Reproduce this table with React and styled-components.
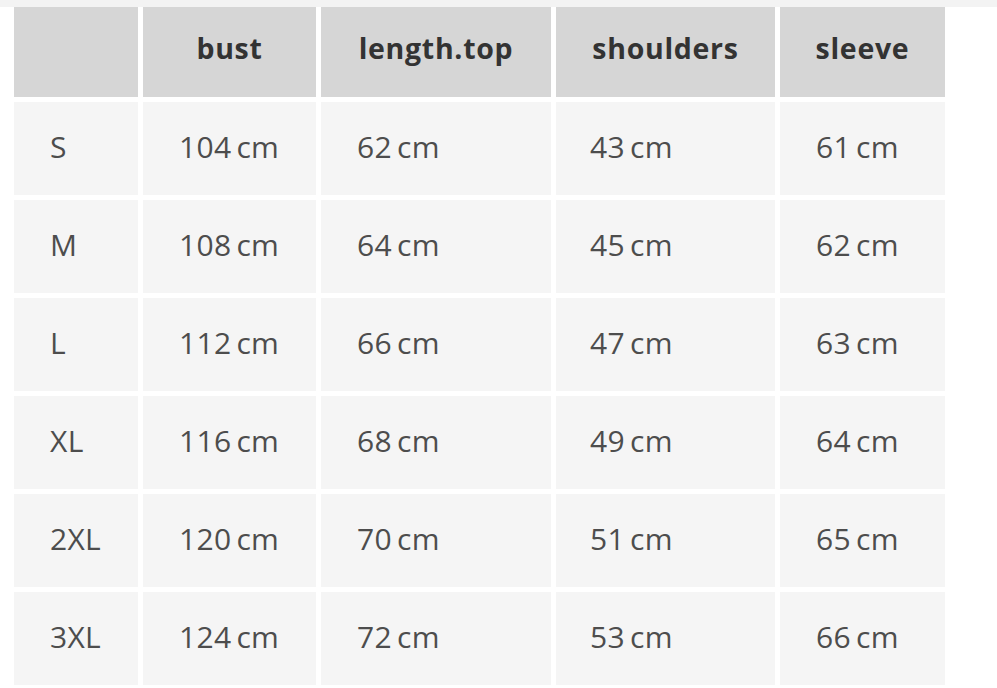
import React from 'react'
import styled, { createGlobalStyle } from 'styled-components'

const GlobalStyle = createGlobalStyle`
    html, body {
        margin: 0;
        padding: 0;
        background: #ffffff;
    }
    body {
        font-family: 'Open Sans', 'Noto Sans', sans-serif;
    }
`

const TopStrip = styled.div`
    height: 7px;
    background: #f3f3f3;
`

const Table = styled.div`
    display: grid;
    grid-template-columns: 124px 173px 230px 219px 165px;
    grid-template-rows: 90px repeat(6, 93px);
    column-gap: 5px;
    row-gap: 5px;
    margin-left: 14px;
`

const HeadCell = styled.div`
    background: #d6d6d6;
    display: flex;
    align-items: center;
    justify-content: center;
    padding-bottom: 8px;
    font-size: 28.5px;
    font-weight: 700;
    color: #333333;
    letter-spacing: 0.7px;
`

const Cell = styled.div`
    background: #f5f5f5;
    display: flex;
    align-items: center;
    padding-left: ${({ $pad }) => $pad || 36}px;
    padding-bottom: 4px;
    font-size: 30px;
    color: #4d4d4d;
    letter-spacing: 0.3px;
    word-spacing: -3px;
    white-space: pre;
`

const headers = ['', 'bust', 'length.top', 'shoulders', 'sleeve']

const rows = [
    ['S', 104, 62, 43, 61],
    ['M', 108, 64, 45, 62],
    ['L', 112, 66, 47, 63],
    ['XL', 116, 68, 49, 64],
    ['2XL', 120, 70, 51, 65],
    ['3XL', 124, 72, 53, 66],
]

export default function App() {
    return (
        <>
            <GlobalStyle />
            <TopStrip />
            <Table>
                {headers.map((h, i) => (
                    <HeadCell key={'h' + i}>{h}</HeadCell>
                ))}
                {rows.map(row =>
                    row.map((val, i) => (
                        <Cell key={row[0] + i} $pad={i === 3 ? 34 : 36}>
                            {i === 0 ? val : `${val} cm`}
                        </Cell>
                    )),
                )}
            </Table>
        </>
    )
}
